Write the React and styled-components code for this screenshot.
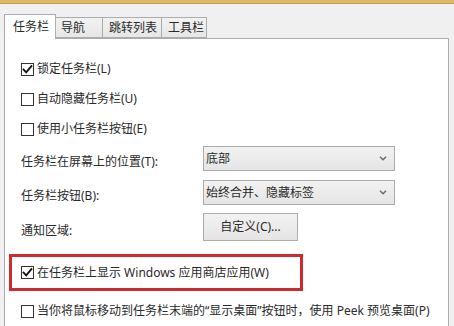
import styled, { createGlobalStyle } from 'styled-components';

const GlobalStyle = createGlobalStyle`
  html, body {
    margin: 0;
    padding: 0;
    background: #f0f0f0;
  }
  * {
    box-sizing: border-box;
  }
`;

const tabs = [
  { label: '任务栏', width: 52, pad: 8, active: true },
  { label: '导航', width: 48, pad: 5 },
  { label: '跳转列表', width: 60, pad: 6 },
  { label: '工具栏', width: 46, pad: 6 }
];

function Tick() {
  return (
    <svg width='11' height='11' viewBox='0 0 11 11'>
      <path
        d='M1.6 5.6 L4.2 8.3 L9.4 2.2'
        fill='none'
        stroke='#111'
        strokeWidth='1.9'
        strokeLinecap='square'
      />
    </svg>
  );
}

function Chevron() {
  return (
    <svg width='8' height='5' viewBox='0 0 8 5'>
      <path
        d='M1 0.8 L4 3.8 L7 0.8'
        fill='none'
        stroke='#6b6b6b'
        strokeWidth='1.5'
      />
    </svg>
  );
}

function Check({ checked, children }) {
  return (
    <CheckRow>
      <Box>{checked && <Tick />}</Box>
      <span>{children}</span>
    </CheckRow>
  );
}

export default function App() {
  return (
    <Window>
      <GlobalStyle />
      <TitleEdge />
      <TabStrip>
        {tabs.map((t) => (
          <Tab key={t.label} active={t.active} width={t.width} pad={t.pad}>
            {t.label}
          </Tab>
        ))}
      </TabStrip>
      <Panel>
        <Check checked>锁定任务栏(L)</Check>
        <Check>自动隐藏任务栏(U)</Check>
        <Check>使用小任务栏按钮(E)</Check>

        <FieldRow gap={2}>
          <Label>任务栏在屏幕上的位置(T):</Label>
          <Select>
            <span>底部</span>
            <Chevron />
          </Select>
        </FieldRow>
        <FieldRow gap={9}>
          <Label>任务栏按钮(B):</Label>
          <Select>
            <span>始终合并、隐藏标签</span>
            <Chevron />
          </Select>
        </FieldRow>
        <FieldRow gap={8}>
          <Label>通知区域:</Label>
          <Button>自定义(C)...</Button>
        </FieldRow>

        <Highlight>
          <Check checked>在任务栏上显示 Windows 应用商店应用(W)</Check>
        </Highlight>
        <LastRow>
          <Check>当你将鼠标移动到任务栏末端的“显示桌面”按钮时，使用 Peek 预览桌面(P)</Check>
        </LastRow>
      </Panel>
    </Window>
  );
}

const Window = styled.div`
  width: 454px;
  height: 326px;
  overflow: hidden;
  background: #f0f0f0;
  font-family: 'Noto Sans', 'Noto Sans CJK SC', sans-serif;
  font-size: 12px;
  line-height: 16px;
  color: #2a2a2a;
`;

const TitleEdge = styled.div`
  height: 4px;
  background: #dcb769;
  border-bottom: 1px solid #c9a250;
`;

const TabStrip = styled.div`
  display: flex;
  align-items: flex-end;
  height: 25px;
  margin-top: 9px;
  padding-left: 4px;
  position: relative;
  z-index: 2;
`;

const Tab = styled.div`
  width: ${(p) => p.width}px;
  height: ${(p) => (p.active ? 25 : 21)}px;
  margin-left: -1px;
  margin-bottom: ${(p) => (p.active ? -1 : 0)}px;
  padding-left: ${(p) => p.pad}px;
  display: flex;
  align-items: center;
  padding-top: ${(p) => (p.active ? 0 : 1)}px;
  border: 1px solid #acacac;
  border-bottom: ${(p) => (p.active ? 'none' : '1px solid #acacac')};
  background: ${(p) =>
    p.active ? '#ffffff' : 'linear-gradient(#f2f2f2, #e6e6e6)'};
  position: relative;
  z-index: ${(p) => (p.active ? 2 : 1)};
  font-size: 12px;

  &:first-child {
    margin-left: 0;
  }
`;

const Panel = styled.div`
  margin-left: 4px;
  width: 445px;
  height: 300px;
  background: #ffffff;
  border: 1px solid #acacac;
  padding: 15px 0 0 16px;
  display: flex;
  flex-direction: column;
`;

const CheckRow = styled.div`
  height: 30px;
  display: flex;
  align-items: center;
  white-space: nowrap;
`;

const Box = styled.div`
  width: 13px;
  height: 13px;
  margin-right: 3px;
  border: 1px solid #333333;
  background: #ffffff;
  display: flex;
  align-items: center;
  justify-content: center;
  flex-shrink: 0;
`;

const FieldRow = styled.div`
  display: flex;
  align-items: center;
  margin-top: ${(p) => p.gap}px;
`;

const Label = styled.div`
  width: 182px;
  padding-top: 7px;
  white-space: nowrap;
`;

const Select = styled.div`
  width: 192px;
  height: 25px;
  border: 1px solid #acacac;
  background: linear-gradient(#f2f2f2, #e5e5e5);
  display: flex;
  align-items: center;
  justify-content: space-between;
  padding: 0 7px 0 2px;
`;

const Button = styled.div`
  width: 95px;
  height: 28px;
  border: 1px solid #acacac;
  background: linear-gradient(#f2f2f2, #e5e5e5);
  display: flex;
  align-items: center;
  justify-content: center;
`;

const Highlight = styled.div`
  width: 294px;
  height: 37px;
  margin: 13px 0 0 -12px;
  border: 3px solid #cf2a30;
  padding-left: 9px;
  display: flex;
  align-items: center;
`;

const LastRow = styled.div`
  margin-top: 5px;
`;
